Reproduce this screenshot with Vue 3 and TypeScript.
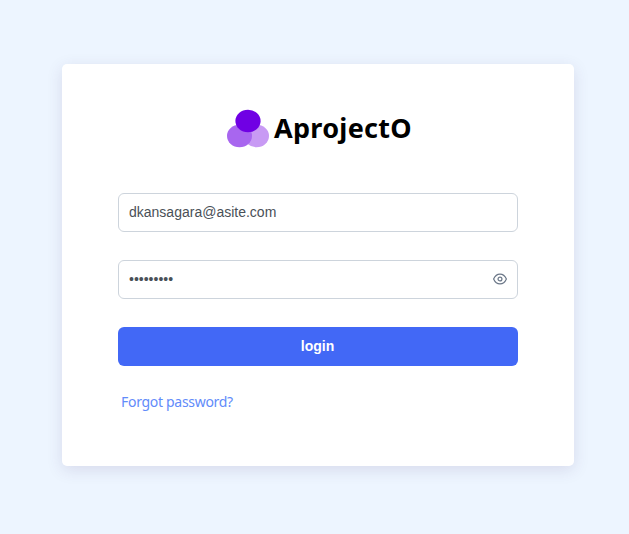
<script setup lang="ts">
import { ref } from 'vue'

const email = ref('dkansagara@asite.com')
const password = ref('secretkey')
const visible = ref(false)
</script>

<template>
  <main class="page">
    <form class="card" @submit.prevent>
      <div class="brand">
        <svg class="logo" width="42" height="39" viewBox="0 0 42 39" aria-hidden="true">
          <ellipse cx="29.5" cy="27" rx="12.5" ry="11.2" fill="#c89af4" />
          <ellipse cx="12.5" cy="27" rx="12.5" ry="11.2" fill="#a866ef" />
          <ellipse cx="21" cy="12" rx="12.6" ry="11.3" fill="#7000e4" />
        </svg>
        <span class="name">AprojectO</span>
      </div>
      <div class="field">
        <input v-model="email" type="text" aria-label="Email" />
      </div>
      <div class="field">
        <input v-model="password" :type="visible ? 'text' : 'password'" aria-label="Password" />
        <button class="toggle" type="button" aria-label="Show password" @click="visible = !visible">
          <svg width="14" height="14" viewBox="0 0 14 14" fill="none" stroke="#6b7788" stroke-width="1.2">
            <path d="M.6 7C1.3 5.4 3.35 2.1 7 2.1S12.7 5.4 13.4 7C12.7 8.6 10.65 11.9 7 11.9S1.3 8.6.6 7Z" stroke-linejoin="round" />
            <circle cx="7" cy="7" r="1.95" />
          </svg>
        </button>
      </div>
      <button class="login" type="submit">login</button>
      <a class="forgot" href="#">Forgot password?</a>
    </form>
  </main>
</template>

<style>
body {
  margin: 0;
  background: #edf5ff;
}
</style>

<style scoped>
.page {
  box-sizing: border-box;
  height: 534px;
  padding: 64px 55px 68px 62px;
  background: #edf5ff;
}

.card {
  box-sizing: border-box;
  display: flex;
  flex-direction: column;
  width: 512px;
  height: 402px;
  padding: 45px 56px 0;
  border-radius: 5px;
  background: #fff;
  box-shadow: 0 4px 16px rgba(70, 50, 110, 0.13);
}

.brand {
  display: flex;
  align-items: flex-start;
  height: 38px;
  margin: 0 0 46px 109px;
}

.logo {
  flex: none;
}

.name {
  margin-left: 5px;
  color: #000;
  font: 700 27px/38px "Noto Sans", sans-serif;
  letter-spacing: 0.3px;
  white-space: nowrap;
}

.field {
  box-sizing: border-box;
  display: flex;
  align-items: center;
  height: 39px;
  margin-bottom: 28px;
  border: 1px solid #cdd4dc;
  border-radius: 6px;
}

input {
  flex: 1;
  min-width: 0;
  padding: 0 10px;
  border: 0;
  outline: 0;
  background: transparent;
  color: #495057;
  font: 14px/17px "Liberation Sans", Arial, sans-serif;
}

.toggle {
  display: flex;
  margin: 0 10px 1px 0;
  padding: 0;
  border: 0;
  background: none;
}

.login {
  height: 39px;
  padding: 0 1px 0 0;
  border: 0;
  border-radius: 6px;
  background: #4268f6;
  color: #fff;
  font: 700 14px/39px "Liberation Sans", Arial, sans-serif;
}

.forgot {
  align-self: flex-start;
  margin: 26px 0 0 3px;
  color: #628bfa;
  font: 14px/20px "Noto Sans", sans-serif;
  letter-spacing: -0.3px;
  text-decoration: none;
  white-space: nowrap;
}
</style>
